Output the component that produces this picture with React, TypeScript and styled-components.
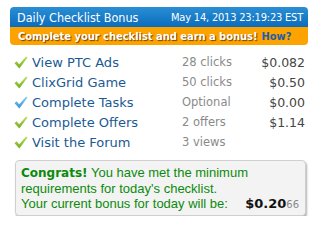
import styled, { createGlobalStyle } from 'styled-components';

const GlobalStyle = createGlobalStyle`
  html, body {
    margin: 0;
    padding: 0;
    background: #ffffff;
  }
  body {
    font-family: "DejaVu Sans", Verdana, sans-serif;
  }
`;

const Panel = styled.div`
  width: 298px;
  margin: 7px 0 0 10px;
`;

const TitleBar = styled.div`
  display: flex;
  align-items: center;
  justify-content: space-between;
  height: 20px;
  padding: 0 5px 0 7px;
  border-radius: 4px 4px 0 0;
  background: linear-gradient(#2a8fd6, #0b6cbc);
  color: #ffffff;
  white-space: nowrap;
`;

const Title = styled.span`
  font-family: "DejaVu Sans Condensed", "DejaVu Sans", sans-serif;
  font-size: 12.5px;
`;

const Stamp = styled.span`
  font-family: "DejaVu Sans Condensed", "DejaVu Sans", sans-serif;
  font-size: 11px;
  letter-spacing: -0.2px;
`;

const Banner = styled.div`
  display: flex;
  align-items: center;
  gap: 4px;
  height: 18px;
  padding: 0 8px;
  border-radius: 0 0 4px 4px;
  background: #fca300;
  font-family: "DejaVu Sans Condensed", "DejaVu Sans", sans-serif;
  font-weight: bold;
  font-size: 11px;
  color: #ffffff;
  text-shadow: 1px 1px 1px #6b4200;
  white-space: nowrap;
`;

const HowLink = styled.a`
  color: #1d5fa6;
  text-shadow: none;
  text-decoration: none;
`;

const List = styled.div`
  display: flex;
  flex-direction: column;
  margin-top: 7px;
  padding: 0 3px 0 4px;
`;

const Row = styled.div`
  display: grid;
  grid-template-columns: 18px 150px 1fr auto;
  align-items: center;
  height: 20px;
`;

const Task = styled.span`
  font-size: 13px;
  color: #1a5a94;
`;

const Meta = styled.span`
  font-size: 11.5px;
  color: #8a8a8a;
`;

const Amount = styled.span`
  font-size: 12.5px;
  color: #454545;
  text-align: right;
`;

const Congrats = styled.div`
  margin: 8px 2px 0 5px;
  padding: 4px 6px 3px 5px;
  border: 1px solid #cfcfcf;
  border-radius: 4px;
  background: #f3f3f3;
  box-shadow: 1px 2px 2px rgba(0, 0, 0, 0.3);
  color: #0c8a0c;
  font-family: "Liberation Sans", Arial, sans-serif;
  font-size: 13px;
  line-height: 15px;
`;

const Strong = styled.b`
  font-family: "DejaVu Sans", sans-serif;
  font-size: 12px;
`;

const LastLine = styled.div`
  display: flex;
  align-items: baseline;
  justify-content: space-between;
  white-space: nowrap;
`;

const Total = styled.span`
  color: #111111;
  font-family: "DejaVu Sans", sans-serif;
  font-weight: bold;
  font-size: 13px;
`;

const Cents = styled.span`
  color: #888888;
  font-weight: normal;
  font-size: 10px;
`;

const Check = ({ color }: { color: 'green' | 'blue' }) => {
  const light = color === 'green' ? '#b9df5a' : '#8fd0f2';
  const dark = color === 'green' ? '#74ad1e' : '#3193d4';
  const id = `chk-${color}`;
  return (
    <svg width="14" height="13" viewBox="0 0 14 13">
      <defs>
        <linearGradient id={id} x1="0" y1="0" x2="0" y2="1">
          <stop offset="0" stopColor={light} />
          <stop offset="1" stopColor={dark} />
        </linearGradient>
      </defs>
      <path
        d="M0.5 7.2 L2.6 5.3 L5.2 8.2 L12.2 0.6 L13.5 1.6 L5.4 12.4 Z"
        fill={`url(#${id})`}
      />
    </svg>
  );
};

const tasks = [
  { name: 'View PTC Ads', meta: '28 clicks', amount: '$0.082', color: 'green' as const },
  { name: 'ClixGrid Game', meta: '50 clicks', amount: '$0.50', color: 'green' as const },
  { name: 'Complete Tasks', meta: 'Optional', amount: '$0.00', color: 'blue' as const },
  { name: 'Complete Offers', meta: '2 offers', amount: '$1.14', color: 'green' as const },
  { name: 'Visit the Forum', meta: '3 views', amount: '', color: 'green' as const },
];

export default function App() {
  return (
    <>
      <GlobalStyle />
      <Panel>
        <TitleBar>
          <Title>Daily Checklist Bonus</Title>
          <Stamp>May 14, 2013 23:19:23 EST</Stamp>
        </TitleBar>
        <Banner>
          <span>Complete your checklist and earn a bonus!</span>
          <HowLink href="#">How?</HowLink>
        </Banner>
        <List>
          {tasks.map((t) => (
            <Row key={t.name}>
              <Check color={t.color} />
              <Task>{t.name}</Task>
              <Meta>{t.meta}</Meta>
              <Amount>{t.amount}</Amount>
            </Row>
          ))}
        </List>
        <Congrats>
          <div>
            <Strong>Congrats!</Strong> You have met the minimum
          </div>
          <div>requirements for today's checklist.</div>
          <LastLine>
            <span>Your current bonus for today will be:</span>
            <Total>
              $0.20<Cents>66</Cents>
            </Total>
          </LastLine>
        </Congrats>
      </Panel>
    </>
  );
}
